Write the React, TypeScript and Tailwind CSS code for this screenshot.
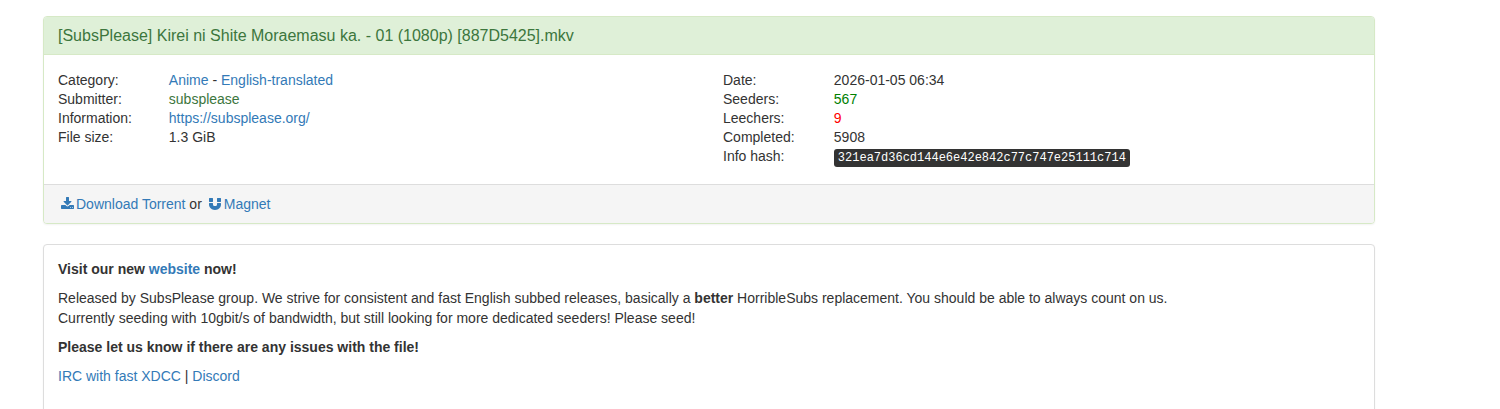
import type { ReactNode } from 'react';

interface LinkProps {
  href: string;
  children: ReactNode;
  className?: string;
}

function Link({ href, children, className = 'text-[#337ab7]' }: LinkProps) {
  return (
    <a href={href} className={`${className} hover:underline`}>
      {children}
    </a>
  );
}

function DownloadIcon() {
  return (
    <svg viewBox="0 0 1664 1536" className="inline-block w-[13px] h-3 ml-[3px] mr-[2px] align-baseline" fill="currentColor" aria-hidden="true">
      <path d="M1280 1344q0-26-19-45t-45-19-45 19-19 45 19 45 45 19 45-19 19-45zm256 0q0-26-19-45t-45-19-45 19-19 45 19 45 45 19 45-19 19-45zm128-224v320q0 40-28 68t-68 28h-1472q-40 0-68-28t-28-68v-320q0-40 28-68t68-28h465l135 136q58 56 136 56t136-56l136-136h464q40 0 68 28t28 68zm-325-569q17 41-14 70l-448 448q-18 19-45 19t-45-19l-448-448q-31-29-14-70 17-39 59-39h256v-448q0-26 19-45t45-19h256q26 0 45 19t19 45v448h256q42 0 59 39z" />
    </svg>
  );
}

function MagnetIcon() {
  return (
    <svg viewBox="0 0 1536 1536" className="inline-block w-3 h-3 mx-[3px] align-[-1px]" fill="currentColor" aria-hidden="true">
      <path d="M1536 704v128q0 201-98.5 362t-274 251.5t-395.5 90.5t-395.5-90.5t-274-251.5t-98.5-362v-128q0-26 19-45t45-19h384q26 0 45 19t19 45v128q0 52 23.5 90t53.5 57t71 30t64 13t44 2t44-2t64-13t71-30t53.5-57t23.5-90v-128q0-26 19-45t45-19h384q26 0 45 19t19 45zM512 64v384q0 26-19 45t-45 19h-384q-26 0-45-19t-19-45v-384q0-26 19-45t45-19h384q26 0 45 19t19 45zM1536 64v384q0 26-19 45t-45 19h-384q-26 0-45-19t-19-45v-384q0-26 19-45t45-19h384q26 0 45 19t19 45z" />
    </svg>
  );
}

function Row({ label, children }: { label: string; children: ReactNode }) {
  return (
    <div className="grid grid-cols-6">
      <dt>{label}</dt>
      <dd className="col-span-5">{children}</dd>
    </div>
  );
}

export default function App() {
  return (
    <main
      className={`pt-4 pl-[43px] pr-[125px] text-sm leading-5 text-[#333] font-['Liberation_Sans',Arial,sans-serif]`}
    >
      <section className="mb-5 rounded border border-[#d6e9c6] bg-white shadow-xs">
        <div className="rounded-t-[3px] border-b border-[#d6e9c6] bg-[#dff0d8] px-[14px] py-[9px]">
          <h3 className="text-base leading-[19px] text-[#3c763d]">
            [SubsPlease] Kirei ni Shite Moraemasu ka. - 01 (1080p) [887D5425].mkv
          </h3>
        </div>

        <div className="grid grid-cols-2 pt-4 pb-[18px] leading-[19px]">
          <dl className="pl-[14px] -mr-[14px]">
            <Row label="Category:">
              <Link href="#anime">Anime</Link> - <Link href="#english-translated">English-translated</Link>
            </Row>
            <Row label="Submitter:">
              <Link href="#subsplease" className="text-[#3c763d]">subsplease</Link>
            </Row>
            <Row label="Information:">
              <Link href="https://subsplease.org/">https://subsplease.org/</Link>
            </Row>
            <Row label="File size:">1.3 GiB</Row>
          </dl>
          <dl className="pl-[14px] -mr-[14px]">
            <Row label="Date:">2026-01-05 06:34</Row>
            <Row label="Seeders:">
              <span className="text-[green]">567</span>
            </Row>
            <Row label="Leechers:">
              <span className="text-[red]">9</span>
            </Row>
            <Row label="Completed:">5908</Row>
            <Row label="Info hash:">
              <kbd className={`rounded-[3px] bg-[#333] px-1 py-[2px] text-xs leading-none text-white font-['Liberation_Mono',monospace]`}>
                321ea7d36cd144e6e42e842c77c747e25111c714
              </kbd>
            </Row>
          </dl>
        </div>

        <div className="rounded-b-[3px] border-t border-[#ddd] bg-[#f5f5f5] px-[14px] py-[9px]">
          <Link href="#download"><DownloadIcon />Download Torrent</Link> or{' '}
          <Link href="#magnet"><MagnetIcon />Magnet</Link>
        </div>
      </section>

      <section className="space-y-[9px] rounded border border-[#ddd] bg-white px-[14px] pt-[14px] pb-10 shadow-xs">
        <p className="font-bold">
          Visit our new <Link href="https://subsplease.org/">website</Link> now!
        </p>
        <p>
          Released by SubsPlease group. We strive for consistent and fast English subbed releases, basically a{' '}
          <strong>better</strong> HorribleSubs replacement. You should be able to always count on us.
          <br />
          Currently seeding with 10gbit/s of bandwidth, but still looking for more dedicated seeders! Please seed!
        </p>
        <p className="font-bold">Please let us know if there are any issues with the file!</p>
        <p>
          <Link href="#irc">IRC with fast XDCC</Link> | <Link href="#discord">Discord</Link>
        </p>
      </section>
    </main>
  );
}
